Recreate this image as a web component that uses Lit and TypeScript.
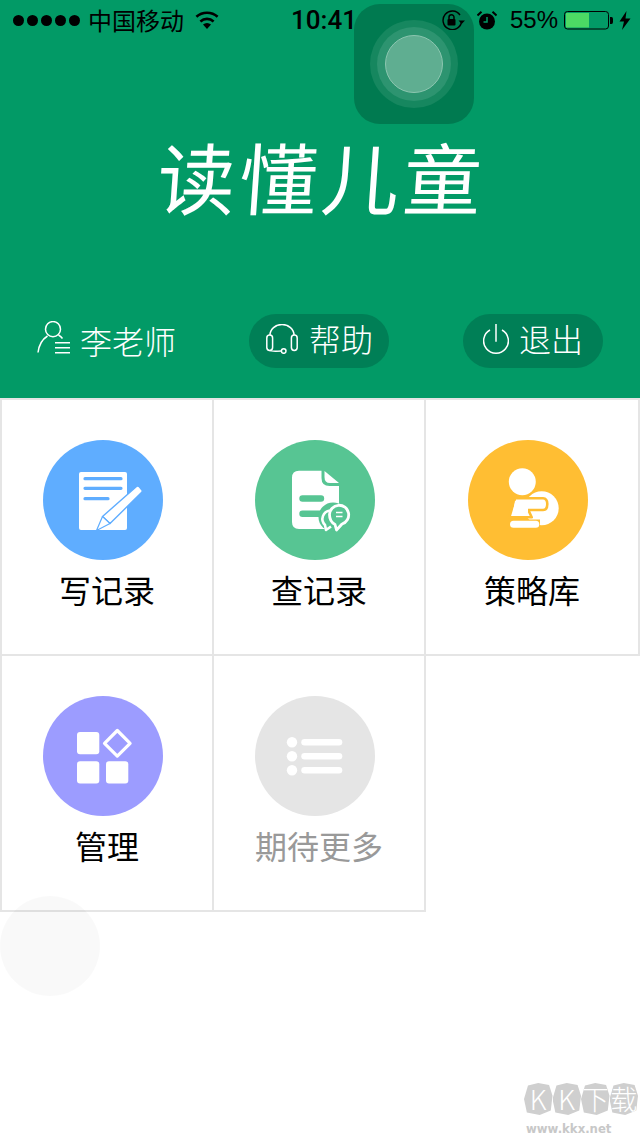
import { LitElement, html, css, svg } from "lit";
import { customElement } from "lit/decorators.js";

const docIcon = svg`
  <rect x="36" y="32" width="48" height="58" rx="2" fill="#fff"/>
  <g stroke="#5FADFF" stroke-width="3.2" stroke-linecap="round">
    <path d="M42 38.7H78M42 48.3H78M42 58.7H65"/>
  </g>
  <path d="M93.5 46.5Q95 45.5 96.5 47L98.5 49.5Q100 51 98.5 52.5L67 83.5L59.5 76.5Z" fill="#fff" stroke="#5FADFF" stroke-width="1.4" stroke-linejoin="round"/>
  <path d="M59.5 76.5L67 83.5L53.5 90.5Z" fill="#fff" stroke="#5FADFF" stroke-width="1.2" stroke-linejoin="round"/>`;

const recordIcon = svg`
  <path d="M44 30.7H66.5V38Q66.5 46 74.5 46H84V82Q84 89 77 89H44Q37 89 37 82V37.7Q37 30.7 44 30.7Z" fill="#fff"/>
  <path d="M69.5 31L84 43H75Q69.5 43 69.5 37Z" fill="#fff"/>
  <g stroke="#57C593" stroke-width="6.4" stroke-linecap="round">
    <path d="M47.5 58.5H66M47.5 73.8H66"/>
  </g>
  <circle cx="78" cy="77" r="14.5" fill="#57C593"/>
  <path d="M75 70.5A8.5 8.5 0 0 0 70 85L71 90L76 86.5" fill="none" stroke="#fff" stroke-width="2.6" stroke-linejoin="round"/>
  <path d="M74.5 74.5A9.6 9.6 0 1 1 87 84L81.5 90L80 84.5Q74.5 81.5 74.5 74.5Z" fill="#57C593" stroke="#fff" stroke-width="2.8" stroke-linejoin="round"/>
  <path d="M81 72.5H87.5M81 76.5H87.5" stroke="#fff" stroke-width="1.6"/>`;

const strategyIcon = svg`
  <circle cx="54.3" cy="41.7" r="13.5" fill="#fff"/>
  <circle cx="73.7" cy="68.3" r="17" fill="#fff"/>
  <path d="M47 58.3H75Q79.3 58.5 79.3 64Q79.3 70 75 70H60.3L63.7 77.3H41.3Z" fill="#fff" stroke="#FFBE33" stroke-width="2.6" stroke-linejoin="round"/>
  <path d="M44 79.5H72V90H44Z" fill="#FFBE33"/>
  <path d="M47 61H60V72H45Z" fill="#fff"/>
  <rect x="42" y="80.7" width="29.3" height="7" rx="3.5" fill="#fff"/>`;

const manageIcon = svg`
  <g fill="#fff">
    <rect x="34" y="36" width="22.3" height="22.3" rx="3"/>
    <rect x="34" y="65.3" width="22.3" height="22.3" rx="3"/>
    <rect x="63" y="65.3" width="22.3" height="22.3" rx="3"/>
  </g>
  <path d="M74.3 34.5L87.1 47.3L74.3 60.1L61.5 47.3Z" fill="none" stroke="#fff" stroke-width="3.2" stroke-linejoin="round"/>`;

const moreIcon = svg`
  <g fill="#fff">
    <circle cx="37" cy="46.3" r="5.2"/><circle cx="37" cy="60.3" r="5.2"/><circle cx="37" cy="74.3" r="5.2"/>
    <rect x="46.3" y="43" width="41" height="6.6" rx="3.3"/>
    <rect x="46.3" y="57" width="41" height="6.6" rx="3.3"/>
    <rect x="46.3" y="71" width="41" height="6.6" rx="3.3"/>
  </g>`;

const tiles = [
  { label: "写记录", color: "#5FADFF", icon: docIcon, muted: false },
  { label: "查记录", color: "#57C593", icon: recordIcon, muted: false },
  { label: "策略库", color: "#FFBE33", icon: strategyIcon, muted: false },
  { label: "管理", color: "#9C9CFF", icon: manageIcon, muted: false },
  { label: "期待更多", color: "#E5E5E5", icon: moreIcon, muted: true },
];

@customElement("app-root")
export class AppRoot extends LitElement {
  static styles = css`
    :host {
      display: block;
      position: relative;
      width: 640px;
      height: 1136px;
      background: #fff;
      overflow: hidden;
      font-family: "Noto Sans CJK SC", "Liberation Sans", sans-serif;
    }
    .header {
      height: 398px;
      box-sizing: border-box;
      background: #029a66;
      display: flex;
      flex-direction: column;
    }
    .status {
      position: relative;
      z-index: 2;
      height: 40px;
      display: flex;
      align-items: center;
      padding-left: 13px;
      color: #000;
    }
    .status-left {
      width: 279px;
      display: flex;
      align-items: center;
    }
    .dots {
      display: flex;
      gap: 3px;
      margin-right: 8px;
    }
    .dots i {
      width: 11px;
      height: 11px;
      border-radius: 50%;
      background: #000;
    }
    .carrier {
      font-size: 24px;
      line-height: 40px;
      margin-right: 11px;
    }
    .time {
      width: 149px;
      margin-left: -1px;
      padding-right: 1px;
      font: 500 26px/40px Roboto, "Liberation Sans", sans-serif;
    }
    .status-right {
      display: flex;
      align-items: center;
    }
    .percent {
      font: 400 24px/40px "Liberation Sans", sans-serif;
      margin: 0 8px 0 13px;
      width: 46px;
    }
    .status svg {
      display: block;
    }
    .title {
      margin-top: 86px;
      padding-left: 4px;
      height: 98px;
      text-align: center;
      color: #fff;
      font-size: 78px;
      line-height: 98px;
      font-weight: 400;
      letter-spacing: 4px;
      transform: skewX(-4deg);
    }
    .actions {
      margin-top: 90px;
      height: 54px;
      padding: 0 37px;
      display: flex;
      justify-content: space-between;
      align-items: center;
      color: #fff;
      font-size: 32px;
      font-weight: 300;
    }
    .actions span {
      white-space: nowrap;
    }
    .user {
      width: 138px;
      display: flex;
      align-items: center;
      gap: 10px;
    }
    .user span {
      padding-bottom: 2px;
    }
    .user svg {
      flex: none;
      margin-bottom: 8px;
    }
    .pill {
      width: 140px;
      height: 54px;
      box-sizing: border-box;
      border-radius: 27px;
      background: #007f56;
      display: flex;
      align-items: center;
    }
    .pill span {
      padding-bottom: 6px;
    }
    .pill svg {
      flex: none;
      margin-bottom: 4px;
    }
    .pill.help {
      padding-left: 17px;
      gap: 11px;
    }
    .pill.quit {
      padding-left: 20px;
      gap: 10px;
    }
    .grid {
      display: grid;
      grid-template-columns: 214px 212px 214px;
      grid-auto-rows: 256px;
      border-top: 2px solid #e5e5e5;
    }
    .tile {
      box-sizing: border-box;
      border-right: 2px solid #e5e5e5;
      border-bottom: 2px solid #e5e5e5;
      display: flex;
      flex-direction: column;
      align-items: center;
      padding-top: 40px;
    }
    .tile:nth-child(3n + 1) {
      border-left: 2px solid #e5e5e5;
    }
    .disc {
      width: 120px;
      height: 120px;
      border-radius: 50%;
      margin-right: 8px;
      flex: none;
    }
    .disc svg {
      display: block;
    }
    .label {
      margin-top: 6px;
      font-size: 32px;
      line-height: 46px;
      color: #000;
    }
    .label.muted {
      color: #999;
    }
    .assistive {
      position: absolute;
      left: 354px;
      top: 4px;
      width: 120px;
      height: 120px;
      border-radius: 26px;
      background: #007a50;
      display: flex;
      align-items: center;
      justify-content: center;
    }
    .ring {
      border-radius: 50%;
      display: flex;
      align-items: center;
      justify-content: center;
    }
    .ring.outer {
      width: 88px;
      height: 88px;
      background: #16875f;
    }
    .ring.mid {
      width: 74px;
      height: 74px;
      background: #2d9470;
    }
    .ring.core {
      width: 58px;
      height: 58px;
      box-sizing: border-box;
      background: #5fae91;
      border: 1px solid #8cc6b0;
    }
    .touch {
      position: absolute;
      left: 0;
      top: 896px;
      width: 100px;
      height: 100px;
      border-radius: 50%;
      background: rgba(0, 0, 0, 0.025);
    }
    .mark {
      position: absolute;
      left: 524px;
      top: 1083px;
      width: 114px;
    }
    .stones {
      display: flex;
      height: 32px;
    }
    .stones span {
      flex: 1;
      background: #cfcfcf;
      color: #fff;
      font-size: 27px;
      font-weight: 300;
      line-height: 32px;
      text-align: center;
      clip-path: polygon(14% 8%, 50% 0, 88% 6%, 100% 40%, 94% 86%, 55% 100%, 10% 92%, 0 50%);
    }
    .url {
      margin: 7px 0 0 2px;
      font: 700 11.7px/14px "DejaVu Sans", sans-serif;
      color: #c8c8c8;
      white-space: nowrap;
    }
  `;

  render() {
    return html`
      <div class="header">
        <div class="status">
          <div class="status-left">
            <div class="dots"><i></i><i></i><i></i><i></i><i></i></div>
            <span class="carrier">中国移动</span>
            <svg width="24" height="18" viewBox="0 0 24 18">
              <path d="M12 18L8 13.6A6 6 0 0 1 16 13.6Z" fill="#000"/>
              <g fill="none" stroke="#000" stroke-width="2.6">
                <path d="M5.4 10.4A10 10 0 0 1 18.6 10.4"/>
                <path d="M1.4 5.8A16 16 0 0 1 22.6 5.8"/>
              </g>
            </svg>
          </div>
          <span class="time">10:41</span>
          <div class="status-right">
            <svg width="24" height="20" viewBox="0 0 24 20">
              <path d="M20.5 12A9.3 9.3 0 1 1 19 5" fill="none" stroke="#000" stroke-width="1.4"/>
              <path d="M17.5 10.5H24L20.7 14Z" fill="#000"/>
              <rect x="6.5" y="9" width="8" height="6.5" rx="1" fill="#000"/>
              <path d="M8 9V7.2A2.5 2.5 0 0 1 13 7.2V9" fill="none" stroke="#000" stroke-width="1.5"/>
            </svg>
            <svg style="margin-left:12px" width="20" height="19" viewBox="0 0 20 19">
              <circle cx="10" cy="10.5" r="8" fill="#000"/>
              <path d="M10 6V11H6.5" fill="none" stroke="#029a66" stroke-width="1.5"/>
              <path d="M0.5 4.5L4.5 0.8M19.5 4.5L15.5 0.8" stroke="#000" stroke-width="2"/>
            </svg>
            <span class="percent">55%</span>
            <svg width="50" height="19" viewBox="0 0 50 19">
              <rect x="0.5" y="0.5" width="44" height="17.5" rx="3" fill="none" stroke="#000"/>
              <rect x="2" y="2" width="23" height="14.5" fill="#4cd964"/>
              <path d="M46 6H47.5Q49 6 49 8V11Q49 13 47.5 13H46Z" fill="#000"/>
            </svg>
            <svg style="margin-left:5px" width="12" height="19" viewBox="0 0 12 19">
              <path d="M7.5 0L0.5 10.5H5L3 19L11.5 7.5H6.5Z" fill="#000"/>
            </svg>
          </div>
        </div>
        <div class="title">读懂儿童</div>
        <div class="actions">
          <div class="user">
            <svg width="33" height="33" viewBox="0 0 33 33" fill="none" stroke="#fff" stroke-width="1.5">
              <ellipse cx="16" cy="8.2" rx="7.5" ry="7.6"/>
              <path d="M1 31.5Q2.5 20 10.5 15"/>
              <path d="M21.5 14Q24 15.5 25.5 17.5"/>
              <path d="M18 21.7H33M18 26.7H33M18 31.7H33"/>
            </svg>
            <span>李老师</span>
          </div>
          <div class="pill help">
            <svg width="32" height="30" viewBox="0 0 32 30" fill="none" stroke="#fff" stroke-width="1.5">
              <path d="M4 11A12 10.5 0 0 1 28 11"/>
              <rect x="0.8" y="11" width="5.8" height="15.5" rx="2.9"/>
              <rect x="25.4" y="11" width="5.8" height="15.5" rx="2.9"/>
              <path d="M3.5 26.5Q5 27.5 15.4 27"/>
              <circle cx="17.7" cy="27" r="2.3"/>
            </svg>
            <span>帮助</span>
          </div>
          <div class="pill quit">
            <svg width="26" height="30" viewBox="0 0 26 30" fill="none" stroke="#fff" stroke-width="1.5">
              <path d="M13 0V17.7"/>
              <path d="M7 6A12.4 12.4 0 1 0 19 6"/>
            </svg>
            <span>退出</span>
          </div>
        </div>
      </div>
      <div class="grid">
        ${tiles.map(
          (t) => html`
            <div class="tile">
              <div class="disc" style="background:${t.color}">
                <svg width="120" height="120" viewBox="0 0 120 120">${t.icon}</svg>
              </div>
              <div class="label ${t.muted ? "muted" : ""}">${t.label}</div>
            </div>
          `
        )}
      </div>
      <div class="assistive">
        <div class="ring outer"><div class="ring mid"><div class="ring core"></div></div></div>
      </div>
      <div class="touch"></div>
      <div class="mark">
        <div class="stones"><span>K</span><span>K</span><span>下</span><span>载</span></div>
        <div class="url">www.kkx.net</div>
      </div>
    `;
  }
}
